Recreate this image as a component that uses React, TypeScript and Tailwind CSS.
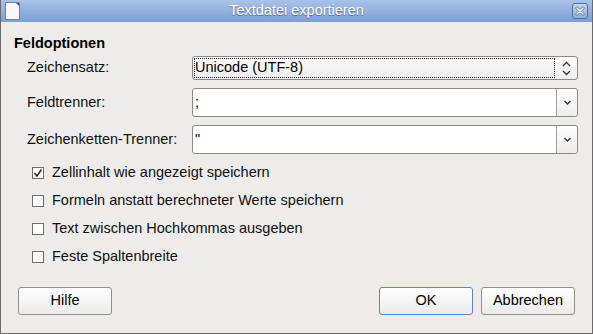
import { useState } from "react";

const font = { fontFamily: '"Liberation Sans", Arial, sans-serif' };

function Chevron({ up = false }: { up?: boolean }) {
  return (
    <svg width="9" height="6" viewBox="0 0 9 6" className="block">
      <path
        d={up ? "M1 5 L4.5 1.5 L8 5" : "M1 1 L4.5 4.5 L8 1"}
        fill="none"
        stroke="#3a3a3a"
        strokeWidth="1.3"
      />
    </svg>
  );
}

function Combo({ value }: { value: string }) {
  return (
    <div className="flex h-[29px] w-[386px] rounded-[3px] border border-[#8a8a8a] bg-white">
      <div className="flex flex-1 items-center pl-[2px] text-[14.5px] text-black">{value}</div>
      <div className="flex w-[21px] items-center justify-center rounded-r-[3px] border-l border-[#a0a0a0] bg-gradient-to-b from-white to-[#ececec]">
        <svg width="7" height="5" viewBox="0 0 7 5">
          <path d="M0.5 1 L3.5 4 L6.5 1" fill="none" stroke="#333" strokeWidth="1.4" />
        </svg>
      </div>
    </div>
  );
}

function Check({ label, checked }: { label: string; checked?: boolean }) {
  const [on, setOn] = useState(!!checked);
  return (
    <label className="flex h-[28px] cursor-default items-center" onClick={() => setOn(!on)}>
      <span className="ml-[31px] flex h-[12px] w-[12px] items-center justify-center border border-[#6f6f6f] bg-white">
        {on && (
          <svg width="10" height="10" viewBox="0 0 10 10">
            <path d="M1.5 5 L4 8 L8.5 1.5" fill="none" stroke="#222" strokeWidth="1.4" />
          </svg>
        )}
      </span>
      <span className="ml-[8px] text-[14.5px] text-[#111]">{label}</span>
    </label>
  );
}

function Button({ children, focused }: { children: string; focused?: boolean }) {
  return (
    <button
      className={
        "h-[28px] w-[94px] rounded-[3px] border bg-gradient-to-b from-white to-[#ebebeb] text-[14.5px] text-black " +
        (focused ? "border-[#5c86c6]" : "border-[#8f8f8f]")
      }
    >
      {children}
    </button>
  );
}

export default function App() {
  return (
    <div style={font} className="flex h-[334px] w-[593px] flex-col border-x border-b border-[#6a6a6a] bg-[#edeceb]">
      <div className="relative flex h-[22px] items-center justify-center bg-gradient-to-b from-[#a9c3e8] to-[#7c9fd3]">
        <svg width="15" height="18" viewBox="0 0 15 18" className="absolute left-[4px] top-[2px]">
          <path d="M0.5 0.5 H11 L14.5 4 V17.5 H0.5 Z" fill="#f8f8f8" stroke="#6f7f95" />
          <path d="M11 0.5 L14.5 0.5 L14.5 4 Z" fill="#3e4a5a" />
        </svg>
        <span className="text-[14.5px] text-white [text-shadow:0_1px_1px_rgba(40,60,100,0.6)]">
          Textdatei exportieren
        </span>
        <div className="absolute right-[4px] top-[3px] flex h-[16px] w-[16px] items-center justify-center rounded-[3px] border border-[#4f6f9e] bg-gradient-to-b from-[#c4d6ef] to-[#8eaedb]">
          <svg width="10" height="10" viewBox="0 0 10 10">
            <path d="M2 2 L8 8 M8 2 L2 8" stroke="#4c6c9c" strokeWidth="3" strokeLinecap="round" />
            <path d="M2 2 L8 8 M8 2 L2 8" stroke="white" strokeWidth="1.6" strokeLinecap="round" />
          </svg>
        </div>
      </div>

      <div className="px-[13px] pt-[11px] text-[14.5px] font-bold leading-[20px] text-black">Feldoptionen</div>

      <div className="mt-[3px] flex flex-col gap-[8px]">
        <div className="flex items-center">
          <div className="w-[191px] pl-[26px] text-[14.5px] text-[#111]">Zeichensatz:</div>
          <div className="flex h-[24px] w-[386px] rounded-[3px] border border-[#8a8a8a] bg-gradient-to-b from-white to-[#ececec]">
            <div className="my-[1px] ml-[1px] flex flex-1 items-center border border-dotted border-[#222] text-[14.5px] text-black">
              Unicode (UTF-8)
            </div>
            <div className="flex w-[22px] flex-col items-center justify-center gap-[3px]">
              <Chevron up />
              <Chevron />
            </div>
          </div>
        </div>
        <div className="flex items-center">
          <div className="w-[191px] pl-[26px] text-[14.5px] text-[#111]">Feldtrenner:</div>
          <Combo value=";" />
        </div>
        <div className="flex items-center">
          <div className="w-[191px] pl-[26px] text-[14.5px] text-[#111]">Zeichenketten-Trenner:</div>
          <Combo value={'"'} />
        </div>
      </div>

      <div className="mt-[5px] flex flex-col">
        <Check label="Zellinhalt wie angezeigt speichern" checked />
        <Check label="Formeln anstatt berechneter Werte speichern" />
        <Check label="Text zwischen Hochkommas ausgeben" />
        <Check label="Feste Spaltenbreite" />
      </div>

      <div className="mt-auto mb-[18px] flex items-center pl-[17px] pr-[17px]">
        <Button>Hilfe</Button>
        <div className="flex-1" />
        <Button focused>OK</Button>
        <div className="w-[8px]" />
        <Button>Abbrechen</Button>
      </div>
    </div>
  );
}
